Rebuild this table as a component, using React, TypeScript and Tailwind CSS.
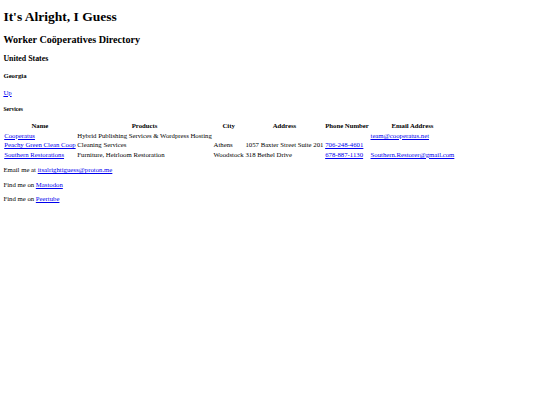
const coops = [
  {
    name: 'Cooperatus',
    products: 'Hybrid Publishing Services & Wordpress Hosting',
    city: '',
    address: '',
    phone: '',
    email: 'team@cooperatus.net',
  },
  {
    name: 'Peachy Green Clean Coop',
    products: 'Cleaning Services',
    city: 'Athens',
    address: '1057 Baxter Street Suite 201',
    phone: '706-248-4601',
    email: '',
  },
  {
    name: 'Southern Restorations',
    products: 'Furniture, Heirloom Restoration',
    city: 'Woodstock',
    address: '318 Bethel Drive',
    phone: '678-887-1130',
    email: 'Southern.Restorer@gmail.com',
  },
];

const link = 'text-[#0000ee] underline';
const cell = 'px-[0.85px] py-[0.9px]';

export default function App() {
  return (
    <div className="min-h-[405px] bg-white px-[3.375px] py-[0.1px] text-black font-['Liberation_Serif',serif] text-[6.75px] leading-[1.15]">
      <h1 className="my-[9.05px] text-[13.5px] font-bold">It's Alright, I Guess</h1>
      <h2 className="my-[8.4px] text-[10.125px] font-bold">Worker Coöperatives Directory</h2>
      <h3 className="my-[7.9px] text-[7.9px] font-bold">United States</h3>
      <h4 className="my-[8.98px] text-[6.75px] font-bold">Georgia</h4>
      <p className="my-[6.75px]">
        <a href="#" className={link}>Up</a>
      </p>
      <h5 className="my-[9.36px] text-[5.6px] font-bold">Services</h5>
      <table className="border-separate border-spacing-[0.84px]">
        <thead>
          <tr>
            {['Name', 'Products', 'City', 'Address', 'Phone Number', 'Email Address'].map(h => (
              <th key={h} className={`${cell} text-center font-bold`}>{h}</th>
            ))}
          </tr>
        </thead>
        <tbody>
          {coops.map(c => (
            <tr key={c.name}>
              <td className={cell}><a href="#" className={link}>{c.name}</a></td>
              <td className={cell}>{c.products}</td>
              <td className={cell}>{c.city}</td>
              <td className={cell}>{c.address}</td>
              <td className={cell}>{c.phone && <a href="#" className={link}>{c.phone}</a>}</td>
              <td className={cell}>{c.email && <a href="#" className={link}>{c.email}</a>}</td>
            </tr>
          ))}
        </tbody>
      </table>
      <p className="my-[6.75px]">
        Email me at <a href="#" className={link}>itsalrightiguess@proton.me</a>
      </p>
      <p className="my-[6.75px]">
        Find me on <a href="#" className={link}>Mastodon</a>
      </p>
      <p className="my-[6.75px]">
        Find me on <a href="#" className={link}>Peertube</a>
      </p>
    </div>
  );
}
